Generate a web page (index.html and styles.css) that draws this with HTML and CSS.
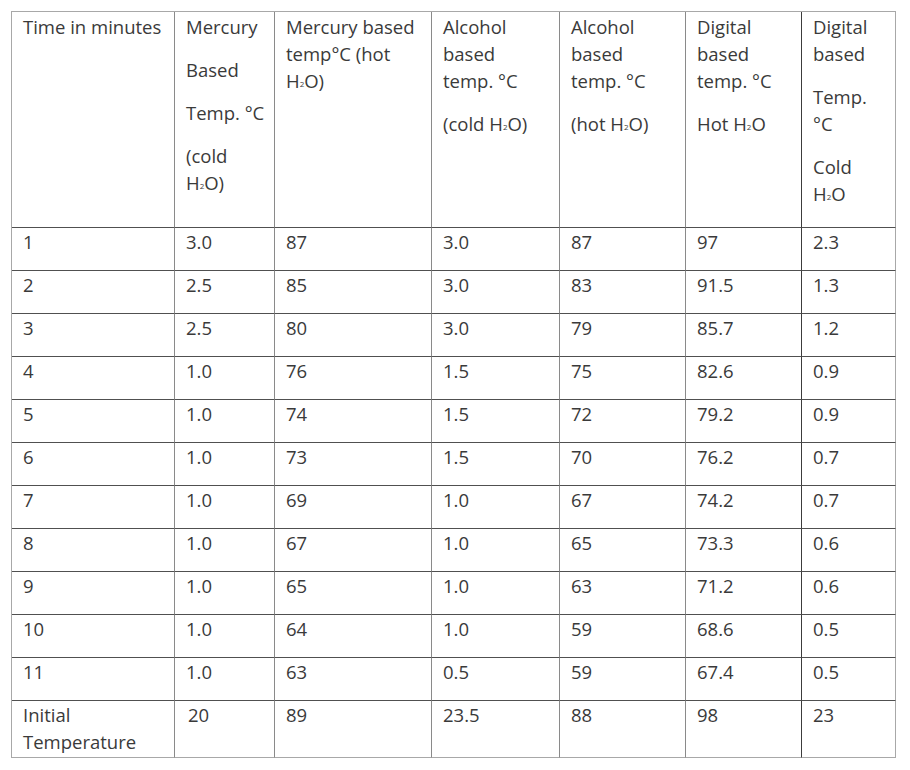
FILE: index.html
```html
<!DOCTYPE html>
<html lang="en">
<head>
<meta charset="utf-8">
<title>Thermometer readings</title>
<link rel="stylesheet" href="styles.css">
</head>
<body>
<table class="data">
  <colgroup>
    <col class="c1"><col class="c2"><col class="c3"><col class="c4"><col class="c5"><col class="c6"><col class="c7">
  </colgroup>
  <thead>
    <tr class="head">
      <th><p>Time in minutes</p></th>
      <th><p>Mercury</p><p>Based</p><p>Temp. °C</p><p>(cold<br>H<sub>2</sub>O)</p></th>
      <th><p>Mercury based<br>temp°C (hot<br>H<sub>2</sub>O)</p></th>
      <th><p>Alcohol<br>based<br>temp. °C</p><p>(cold H<sub>2</sub>O)</p></th>
      <th><p>Alcohol<br>based<br>temp. °C</p><p>(hot H<sub>2</sub>O)</p></th>
      <th class="dark"><p>Digital<br>based<br>temp. °C</p><p>Hot H<sub>2</sub>O</p></th>
      <th class="end"><p>Digital<br>based</p><p>Temp.<br>°C</p><p>Cold<br>H<sub>2</sub>O</p></th>
    </tr>
  </thead>
  <tbody>
    <tr><td><p>1</p></td><td><p>3.0</p></td><td><p>87</p></td><td><p>3.0</p></td><td><p>87</p></td><td class="dark"><p>97</p></td><td class="end"><p>2.3</p></td></tr>
    <tr><td><p>2</p></td><td><p>2.5</p></td><td><p>85</p></td><td><p>3.0</p></td><td><p>83</p></td><td class="dark"><p>91.5</p></td><td class="end"><p>1.3</p></td></tr>
    <tr><td><p>3</p></td><td><p>2.5</p></td><td><p>80</p></td><td><p>3.0</p></td><td><p>79</p></td><td class="dark"><p>85.7</p></td><td class="end"><p>1.2</p></td></tr>
    <tr><td><p>4</p></td><td><p>1.0</p></td><td><p>76</p></td><td><p>1.5</p></td><td><p>75</p></td><td class="dark"><p>82.6</p></td><td class="end"><p>0.9</p></td></tr>
    <tr><td><p>5</p></td><td><p>1.0</p></td><td><p>74</p></td><td><p>1.5</p></td><td><p>72</p></td><td class="dark"><p>79.2</p></td><td class="end"><p>0.9</p></td></tr>
    <tr><td><p>6</p></td><td><p>1.0</p></td><td><p>73</p></td><td><p>1.5</p></td><td><p>70</p></td><td class="dark"><p>76.2</p></td><td class="end"><p>0.7</p></td></tr>
    <tr><td><p>7</p></td><td><p>1.0</p></td><td><p>69</p></td><td><p>1.0</p></td><td><p>67</p></td><td class="dark"><p>74.2</p></td><td class="end"><p>0.7</p></td></tr>
    <tr><td><p>8</p></td><td><p>1.0</p></td><td><p>67</p></td><td><p>1.0</p></td><td><p>65</p></td><td class="dark"><p>73.3</p></td><td class="end"><p>0.6</p></td></tr>
    <tr><td><p>9</p></td><td><p>1.0</p></td><td><p>65</p></td><td><p>1.0</p></td><td><p>63</p></td><td class="dark"><p>71.2</p></td><td class="end"><p>0.6</p></td></tr>
    <tr><td><p>10</p></td><td><p>1.0</p></td><td><p>64</p></td><td><p>1.0</p></td><td><p>59</p></td><td class="dark"><p>68.6</p></td><td class="end"><p>0.5</p></td></tr>
    <tr><td><p>11</p></td><td><p>1.0</p></td><td><p>63</p></td><td><p>0.5</p></td><td><p>59</p></td><td class="dark"><p>67.4</p></td><td class="end"><p>0.5</p></td></tr>
    <tr class="last"><td><p>Initial<br>Temperature</p></td><td><p class="ind">20</p></td><td><p>89</p></td><td><p>23.5</p></td><td><p>88</p></td><td class="dark"><p>98</p></td><td class="end"><p>23</p></td></tr>
  </tbody>
</table>
</body>
</html>
```
FILE: styles.css
```css
html, body {
  margin: 0;
  background: #ffffff;
}

body {
  padding: 11px 0 0 11px;
  font-family: "Open Sans", "Noto Sans", sans-serif;
  font-size: 18.5px;
  color: #3a3a3a;
}

.data {
  border-collapse: separate;
  border-spacing: 0;
  table-layout: fixed;
  width: 885px;
  border-left: 1px solid #a8a8a8;
  border-top: 1px solid #a8a8a8;
}

.c1 { width: 163px; }
.c2 { width: 100px; }
.c3 { width: 157px; }
.c4 { width: 128px; }
.c5 { width: 126px; }
.c6 { width: 116px; }
.c7 { width: 94px; }

.data th,
.data td {
  box-sizing: border-box;
  vertical-align: top;
  text-align: left;
  font-weight: normal;
  padding: 0 4px 0 11px;
  border-right: 1px solid #8a8a8a;
  border-bottom: 1px solid #505050;
  white-space: nowrap;
  overflow: hidden;
}

.data p {
  margin: 0 0 15px;
  line-height: 27px;
}

.head th {
  padding-top: 1px;
  padding-bottom: 4px;
}

.head th p {
  margin-bottom: 16px;
}

.data .dark {
  border-right-color: #3c3c3c;
}

.data .end {
  border-right-color: #a8a8a8;
}

.last td {
  border-bottom-color: #a8a8a8;
}

.last p {
  margin-bottom: 2px;
}

.ind {
  padding-left: 2px;
}

sub {
  font-size: 8px;
  line-height: 0;
  vertical-align: 1px;
}
```
